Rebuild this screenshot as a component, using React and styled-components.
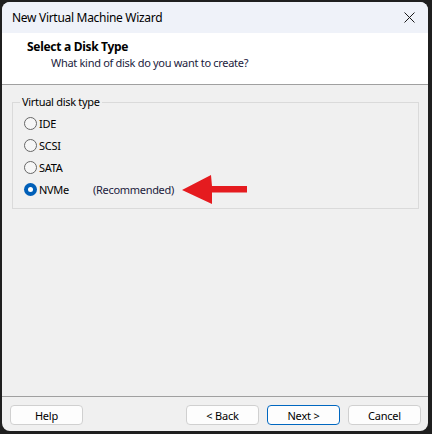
import React from "react";
import styled, { createGlobalStyle } from "styled-components";

const GlobalStyle = createGlobalStyle`
  html, body {
    margin: 0;
    padding: 0;
    background: #1f1f1f;
  }
  body {
    font-family: "Noto Sans", "Open Sans", sans-serif;
    font-size: 12px;
    color: #000;
  }
`;

const Frame = styled.div`
  width: 432px;
  height: 434px;
  padding: 2px 4px 3px 2px;
  box-sizing: border-box;
`;

const Window = styled.div`
  height: 100%;
  display: flex;
  flex-direction: column;
  background: #f0f0f0;
  border-radius: 8px;
  overflow: hidden;
`;

const TitleBar = styled.div`
  height: 31px;
  flex-shrink: 0;
  display: flex;
  align-items: center;
  justify-content: space-between;
  background: #eff2f9;
  padding: 0 9px 0 10px;
`;

const Title = styled.span`
  font-size: 12px;
  letter-spacing: -0.3px;
`;

const CloseBtn = styled.div`
  width: 20px;
  height: 20px;
  display: flex;
  align-items: center;
  justify-content: center;
`;

const Header = styled.div`
  height: 52px;
  flex-shrink: 0;
  background: #fff;
  border-bottom: 1px solid #a0a0a0;
  padding: 6px 0 0 25px;
  box-sizing: border-box;
`;

const HeaderTitle = styled.div`
  font-weight: 700;
  font-size: 12px;
  line-height: 16px;
  letter-spacing: -0.3px;
`;

const HeaderSub = styled.div`
  font-size: 11px;
  line-height: 16px;
  padding-left: 24px;
  color: #1b1b3c;
  letter-spacing: -0.3px;
`;

const Body = styled.div`
  flex: 1;
  padding: 9px 9px 0 10px;
  font-size: 11px;
  letter-spacing: -0.3px;
`;

const Group = styled.fieldset`
  margin: 0;
  border: 1px solid #dadada;
  padding: 0 8px 8px 7px;
`;

const Legend = styled.legend`
  padding: 0 2px;
  line-height: 16px;
`;

const Options = styled.div`
  display: flex;
  flex-direction: column;
  padding-left: 4px;
  margin-top: 2px;
`;

const Option = styled.label`
  height: 22px;
  flex-shrink: 0;
  display: flex;
  align-items: center;
`;

const Radio = styled.span`
  width: 13px;
  height: 13px;
  box-sizing: border-box;
  border-radius: 50%;
  flex-shrink: 0;
  margin-right: 2px;
  display: flex;
  align-items: center;
  justify-content: center;
  border: ${(p) => (p.checked ? "none" : "1px solid #666")};
  background: ${(p) => (p.checked ? "#005fb8" : "#f6f6f6")};
  &::after {
    content: "";
    display: ${(p) => (p.checked ? "block" : "none")};
    width: 5px;
    height: 5px;
    border-radius: 50%;
    background: #fff;
  }
`;

const OptionName = styled.span`
  width: ${(p) => (p.wide ? "54px" : "auto")};
`;

const Note = styled.span`
  width: 77px;
  white-space: nowrap;
  color: #1b1b3c;
`;

const Arrow = styled.svg`
  margin-left: 12px;
  margin-top: 2px;
  flex-shrink: 0;
`;

const Footer = styled.div`
  flex-shrink: 0;
  border-top: 1px solid #a0a0a0;
  display: flex;
  align-items: center;
  padding: 8px 7px 6px 8px;
  gap: 8px;
`;

const Button = styled.button`
  width: 73px;
  height: 20px;
  box-sizing: border-box;
  font-family: "Noto Sans", "Open Sans", sans-serif;
  font-size: 11px;
  letter-spacing: -0.2px;
  line-height: 1;
  color: #000;
  background: #fdfdfd;
  border: 1px solid ${(p) => (p.primary ? "#0067c0" : "#d0d0d0")};
  border-radius: 4px;
  padding: 0;
  margin-left: ${(p) => (p.push ? "auto" : "0")};
`;

const options = ["IDE", "SCSI", "SATA"];

export default function App() {
  return (
    <>
      <GlobalStyle />
      <Frame>
        <Window>
          <TitleBar>
            <Title>New Virtual Machine Wizard</Title>
            <CloseBtn>
              <svg width="11" height="11" viewBox="0 0 11 11">
                <path d="M0.5 0.5 L10.5 10.5 M10.5 0.5 L0.5 10.5" stroke="#1a1a1a" strokeWidth="1" />
              </svg>
            </CloseBtn>
          </TitleBar>
          <Header>
            <HeaderTitle>Select a Disk Type</HeaderTitle>
            <HeaderSub>What kind of disk do you want to create?</HeaderSub>
          </Header>
          <Body>
            <Group>
              <Legend>Virtual disk type</Legend>
              <Options>
                {options.map((o) => (
                  <Option key={o}>
                    <Radio />
                    <OptionName>{o}</OptionName>
                  </Option>
                ))}
                <Option>
                  <Radio checked />
                  <OptionName wide>NVMe</OptionName>
                  <Note>(Recommended)</Note>
                  <Arrow width="66" height="30" viewBox="0 0 66 30">
                    <polygon
                      points="0,15 29,0 30,11 65,11 65,17.5 30,17.5 30,29"
                      fill="#e51b1f"
                    />
                  </Arrow>
                </Option>
              </Options>
            </Group>
          </Body>
          <Footer>
            <Button>Help</Button>
            <Button push>&lt; Back</Button>
            <Button primary>Next &gt;</Button>
            <Button>Cancel</Button>
          </Footer>
        </Window>
      </Frame>
    </>
  );
}
